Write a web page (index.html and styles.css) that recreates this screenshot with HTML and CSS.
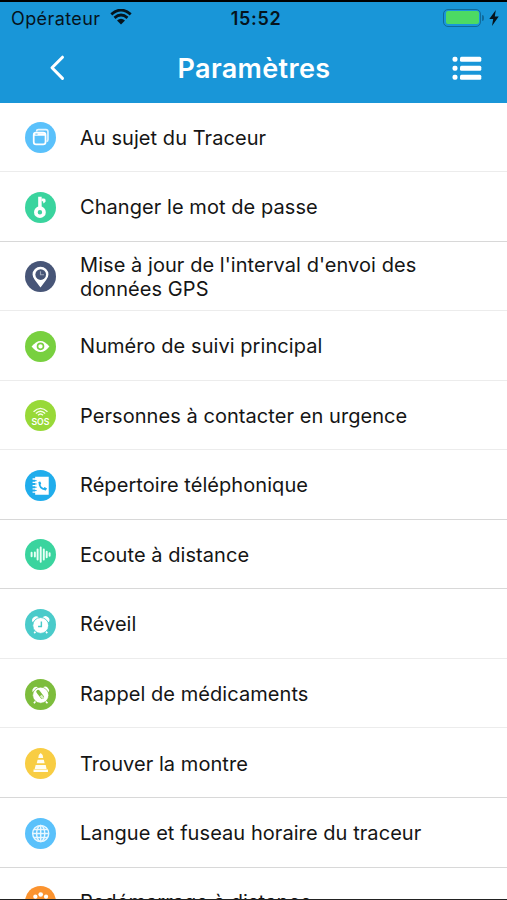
FILE: index.html
```html
<!DOCTYPE html>
<html lang="fr">
<head>
    <meta charset="UTF-8">
    <meta name="viewport" content="width=device-width, initial-scale=1.0">
    <title>Paramètres</title>
    <link rel="stylesheet" href="styles.css">
</head>
<body>
    <div class="phone">
        <header>
            <div class="status-bar">
                <div class="carrier">
                    <span>Opérateur</span>
                    <svg class="wifi" viewBox="0 0 22 16">
                        <path d="M1.3 5.4Q11-3.2 20.7 5.4M4.5 8.9Q11 3.2 17.5 8.9" fill="none" stroke="#06141d" stroke-width="2.8"/>
                        <path d="M7 11.5Q11 8.1 15 11.5L11 15.5Z" fill="#06141d"/>
                    </svg>
                </div>
                <div class="clock">15:52</div>
                <div class="power">
                    <div class="battery"><div class="battery-level"></div></div>
                    <div class="battery-tip"></div>
                    <svg class="bolt" viewBox="0 0 10 16"><path d="M6.8 0L.3 9H4.2L3 16L9.7 6.5H5.8Z" fill="#06141d"/></svg>
                </div>
            </div>
            <nav class="nav-bar">
                <a href="#" class="back" aria-label="Retour">
                    <svg viewBox="0 0 16 26"><path d="M13.5 2.2L3 12.8L13.5 23.4" fill="none" stroke="#fff" stroke-width="3" stroke-linecap="round" stroke-linejoin="round"/></svg>
                </a>
                <h1>Paramètres</h1>
                <a href="#" class="menu" aria-label="Menu">
                    <svg viewBox="0 0 30 24" fill="#fff">
                        <rect x="0.5" y="0.8" width="5" height="5" rx="2"/><rect x="8" y="0.8" width="21.3" height="5" rx="1.5"/>
                        <rect x="0.5" y="9.8" width="5" height="5" rx="2"/><rect x="8" y="9.8" width="21.3" height="5" rx="1.5"/>
                        <rect x="0.5" y="18.8" width="5" height="5" rx="2"/><rect x="8" y="18.8" width="21.3" height="5" rx="1.5"/>
                    </svg>
                </a>
            </nav>
        </header>
        <ul class="settings">
            <li>
                <svg class="icon sky" viewBox="0 0 32 32">
                    <path d="M12 9.8V9.3Q12 7.8 13.8 7.8H21.5Q23.7 7.8 23.7 10V18Q23.7 19.8 22.2 20" fill="none" stroke="#e3f5ff" stroke-width="1.7"/>
                    <rect x="9" y="11" width="12.2" height="12.2" rx="2.5" fill="none" stroke="#fff" stroke-width="1.8"/>
                    <path d="M9 12.8H21.2" stroke="#fff" stroke-width="2.6"/>
                    <path d="M10.7 12.5H13" stroke="#5ac1fb" stroke-width="1"/>
                </svg>
                <span>Au sujet du Traceur</span>
            </li>
            <li>
                <svg class="icon mint" viewBox="0 0 32 32">
                    <path d="M15.4 5V17" stroke="#fff" stroke-width="3.6"/>
                    <path d="M17 6.8H19.4Q21.6 7 21.2 10L19 11.8L18.6 9.5H17Z" fill="#fff"/>
                    <circle cx="15.4" cy="20.8" r="4.2" fill="none" stroke="#fff" stroke-width="3.8"/>
                </svg>
                <span>Changer le mot de passe</span>
            </li>
            <li>
                <svg class="icon navy" viewBox="0 0 32 32">
                    <path d="M16 27.3L10 19.3Q7.8 16.5 7.8 14A8.2 8 0 0 1 24.2 14Q24.2 16.5 22 19.3Z" fill="#fff"/>
                    <circle cx="16.2" cy="14" r="5.5" fill="#475577"/>
                    <path d="M16 10.5V14.2H19.6" fill="none" stroke="#9da6b9" stroke-width="1.2"/>
                </svg>
                <span>Mise à jour de l'interval d'envoi des données GPS</span>
            </li>
            <li>
                <svg class="icon green" viewBox="0 0 32 32">
                    <path d="M6.8 16Q16 4.5 25.2 16Q16 27.5 6.8 16Z" fill="#fff"/>
                    <circle cx="16" cy="15.8" r="3.1" fill="#fff" stroke="#78d03f" stroke-width="1.7"/>
                </svg>
                <span>Numéro de suivi principal</span>
            </li>
            <li>
                <svg class="icon lime" viewBox="0 0 32 32">
                    <path d="M8.8 12.2Q16 5.1 23.2 12.2M11.2 14Q16 9.3 20.8 14M13.4 15.8Q16 13.2 18.6 15.8" fill="none" stroke="#f7ffe9" stroke-width="1.4"/>
                    <text class="sos" x="16" y="25.3" text-anchor="middle">SOS</text>
                </svg>
                <span>Personnes à contacter en urgence</span>
            </li>
            <li>
                <svg class="icon blue" viewBox="0 0 32 32">
                    <path d="M10.5 7H24.5V25.5H10.5Z" fill="#fff"/>
                    <path d="M7.8 9.3H12M7.8 12.7H12M7.8 16.1H12M7.8 19.5H12M7.8 22.9H12" stroke="#fff" stroke-width="1.4"/>
                    <path d="M10 11H12M10 14.4H12M10 17.8H12M10 21.2H12" stroke="#20adec" stroke-width="1"/>
                    <path d="M15 12.5Q14.2 19 21.5 20.3" fill="none" stroke="#20adec" stroke-width="1.8"/>
                    <path d="M13.8 12.8L15.5 11.6L16.8 14.2L15.2 15.4ZM18.8 19.2L20.2 17.6L22.8 19.2L21.4 21.2Z" fill="#20adec"/>
                </svg>
                <span>Répertoire téléphonique</span>
            </li>
            <li>
                <svg class="icon mint" viewBox="0 0 32 32">
                    <path d="M6.8 14.2V17.8M10.2 14V18M13 10.8V21.2M16.2 8.8V23.4M19.4 10.8V21.2M22.4 13.2V18.8M25.4 14.7V17.3" stroke="#e9fff6" stroke-width="2" stroke-linecap="round"/>
                </svg>
                <span>Ecoute à distance</span>
            </li>
            <li>
                <svg class="icon teal" viewBox="0 0 32 32">
                    <path d="M7.8 13.6A4.1 4.1 0 0 1 14.3 8.8ZM18 8.8A4.1 4.1 0 0 1 24.6 13.6Z" fill="#fff"/>
                    <path d="M11.6 22.5L9.5 24.9M20.8 22.5L23 24.9" stroke="#fff" stroke-width="1.7"/>
                    <circle cx="16.2" cy="17" r="8.2" fill="#fff" stroke="#4acbca" stroke-width="0.9"/>
                    <path d="M16.9 12.8V18.1H13.5" fill="none" stroke="#4acbca" stroke-width="1.5"/>
                </svg>
                <span>Réveil</span>
            </li>
            <li>
                <svg class="icon olive" viewBox="0 0 32 32">
                    <path d="M7.8 13.6A4.1 4.1 0 0 1 13.6 8.6ZM18.6 8.6A4.1 4.1 0 0 1 24.6 13.6Z" fill="#fff"/>
                    <path d="M11.4 22.5L9.2 25.1M20.8 22.5L23.2 25.1" stroke="#fff" stroke-width="1.7"/>
                    <circle cx="16.2" cy="16.7" r="8.3" fill="#fff" stroke="#7dbd3c" stroke-width="0.7"/>
                    <path d="M13.5 13L17.8 18.6" stroke="#7dbd3c" stroke-width="3.8" stroke-linecap="round"/>
                    <path d="M17.3 16.3L19.7 19.3L18 20.7L15.2 17.7Z" fill="#d9efc5"/>
                </svg>
                <span>Rappel de médicaments</span>
            </li>
            <li>
                <svg class="icon yellow" viewBox="0 0 32 32">
                    <path d="M16.2 5.2L18.2 7.2L18.8 10.4H13.7L14.3 7.2ZM13 12.2H19.4L20.3 15.7H12.1ZM11 17.6H21.4L22.3 21.6H10ZM8.8 22.2H23.7V24.9H8.8Z" fill="#fffef4"/>
                </svg>
                <span>Trouver la montre</span>
            </li>
            <li>
                <svg class="icon sky" viewBox="0 0 32 32" fill="none" stroke="#e8f7ff" stroke-width="1.5">
                    <circle cx="16.2" cy="16" r="8.3"/>
                    <ellipse cx="16.2" cy="16" rx="4.2" ry="8.3"/>
                    <path d="M16.2 7.7V24.3M7.9 16H24.5M9.2 11.8H23.2M9.2 20.2H23.2"/>
                </svg>
                <span>Langue et fuseau horaire du traceur</span>
            </li>
            <li>
                <svg class="icon orange" viewBox="0 0 32 32" fill="#fff">
                    <circle cx="10.7" cy="11" r="2.2"/><circle cx="16.2" cy="8.8" r="2.4"/><circle cx="21.7" cy="11" r="2.2"/>
                    <circle cx="8.3" cy="16.5" r="2"/><circle cx="24" cy="16.5" r="2"/><circle cx="16.2" cy="18" r="4"/>
                </svg>
                <span>Redémarrage à distance</span>
            </li>
        </ul>
    </div>
</body>
</html>
```
FILE: styles.css
```css
/* General Reset */
* {
    box-sizing: border-box;
}

body, html {
    margin: 0;
    padding: 0;
    background-color: #fff;
    font-family: Inter, "Liberation Sans", sans-serif;
}

svg {
    display: block;
}

.phone {
    width: 507px;
    height: 900px;
    overflow: hidden;
    border-top: 2px solid #000;
    border-bottom: 1px solid #222;
}

/* Header Styling */
header {
    height: 100.7px;
    background-color: #1996d8;
}

.status-bar {
    display: grid;
    grid-template-columns: 1fr auto 1fr;
    align-items: center;
    height: 32px;
    padding: 0 8px 0 11px;
    color: #06141d;
    font-size: 18px;
}

.carrier {
    display: flex;
    align-items: center;
    gap: 10px;
    letter-spacing: 0.4px;
}

.wifi {
    width: 22px;
    height: 16px;
    margin-top: -2px;
}

.clock {
    padding-left: 2px;
    font-weight: 600;
    letter-spacing: 0.7px;
}

.power {
    display: flex;
    align-items: center;
    justify-content: flex-end;
}

.battery {
    width: 38px;
    height: 18px;
    padding: 1.5px;
    border: 1.5px solid #106a9b;
    border-radius: 5px;
    margin-top: -1px;
}

.battery-level {
    height: 100%;
    border-radius: 2px;
    background-color: #4cda63;
}

.battery-tip {
    width: 2px;
    height: 6px;
    margin: 0 5px 0 1px;
    border-radius: 0 2px 2px 0;
    background-color: #106a9b;
}

.bolt {
    width: 10px;
    height: 16px;
}

/* Navigation Bar */
.nav-bar {
    display: grid;
    grid-template-columns: 48px 1fr 48px;
    align-items: center;
    height: 68px;
    padding: 0 25px 0 26px;
}

.back svg {
    width: 16px;
    height: 26px;
    margin-left: 23px;
}

.menu svg {
    width: 30px;
    height: 24px;
    margin-left: auto;
}

h1 {
    margin: 0;
    color: #fff;
    font-size: 27px;
    font-weight: 600;
    letter-spacing: 0.35px;
    text-align: center;
}

/* Settings List */
.settings {
    margin: 0;
    padding: 0;
    list-style: none;
}

.settings li {
    display: flex;
    align-items: center;
    gap: 24px;
    height: 69.54px;
    padding: 1.6px 60px 0 25px;
    border-bottom: 1px solid #ececec;
    color: #151515;
    font-size: 20px;
    letter-spacing: 0.06px;
    line-height: 24px;
}

.settings li:nth-child(2),
.settings li:nth-child(6),
.settings li:nth-child(7),
.settings li:nth-child(10),
.settings li:nth-child(11) {
    border-bottom-color: #d8d8d8;
}

.settings li:last-child {
    padding-top: 0;
}

/* Round Icons */
.icon {
    flex-shrink: 0;
    width: 31px;
    height: 31px;
    border-radius: 50%;
}

.sky { background-color: #5ac1fb; }
.mint { background-color: #3ad49e; }
.navy { background-color: #475577; }
.green { background-color: #78d03f; }
.lime { background-color: #98d938; }
.blue { background-color: #20adec; }
.teal { background-color: #4acbca; }
.olive { background-color: #7dbd3c; }
.yellow { background-color: #f8cd43; }
.orange { background-color: #fb932f; }

.sos {
    fill: #fff;
    font-size: 9px;
    font-weight: 600;
}
```
